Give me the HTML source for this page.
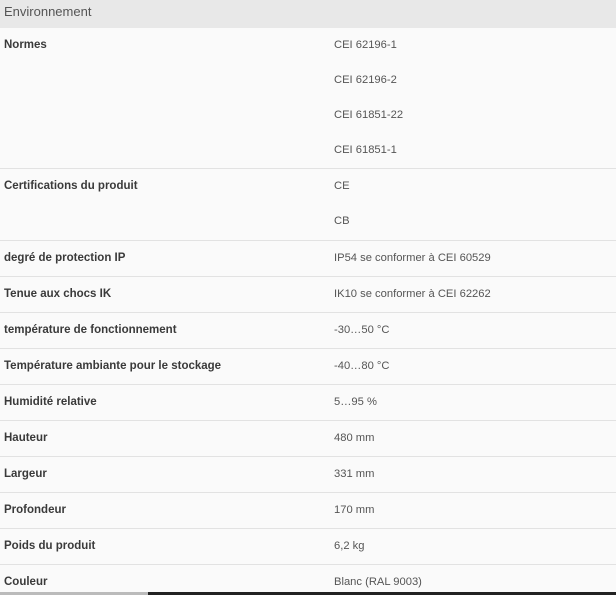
<!DOCTYPE html><html><head><style>
body{margin:0;width:616px;height:595px;overflow:hidden;background:#fafafa;font-family:"Liberation Sans",sans-serif;position:relative}
.h{height:28px;background:#e8e8e8;color:#555;font-size:13px;line-height:24px;padding-left:4px}
.r{position:absolute;left:0;width:616px;border-top:1px solid #e2e2e2}
.l{position:absolute;left:4px;font-size:11.5px;font-weight:bold;color:#3a3a3a;top:11px}
.v{position:absolute;left:334px;font-size:11.2px;color:#555}
.bar{position:absolute;left:0;top:592px;width:616px;height:3px;background:#222}
.bar2{position:absolute;left:0;top:592px;width:148px;height:3px;background:#bbb}
</style></head><body>
<div class="h">Environnement</div>
<div class="r" style="top:28px;border:0"><div class="l">Normes</div>
<div class="v" style="top:11px">CEI 62196-1</div><div class="v" style="top:46px">CEI 62196-2</div><div class="v" style="top:81px">CEI 61851-22</div><div class="v" style="top:116px">CEI 61851-1</div></div>
<div class="r" style="top:168px"><div class="l">Certifications du produit</div><div class="v" style="top:11px">CE</div><div class="v" style="top:46px">CB</div></div>
<div class="r" style="top:240px"><div class="l">degré de protection IP</div><div class="v" style="top:11px">IP54 se conformer à CEI 60529</div></div>
<div class="r" style="top:276px"><div class="l">Tenue aux chocs IK</div><div class="v" style="top:11px">IK10 se conformer à CEI 62262</div></div>
<div class="r" style="top:312px"><div class="l">température de fonctionnement</div><div class="v" style="top:11px">-30…50 °C</div></div>
<div class="r" style="top:348px"><div class="l">Température ambiante pour le stockage</div><div class="v" style="top:11px">-40…80 °C</div></div>
<div class="r" style="top:384px"><div class="l">Humidité relative</div><div class="v" style="top:11px">5…95 %</div></div>
<div class="r" style="top:420px"><div class="l">Hauteur</div><div class="v" style="top:11px">480 mm</div></div>
<div class="r" style="top:456px"><div class="l">Largeur</div><div class="v" style="top:11px">331 mm</div></div>
<div class="r" style="top:492px"><div class="l">Profondeur</div><div class="v" style="top:11px">170 mm</div></div>
<div class="r" style="top:528px"><div class="l">Poids du produit</div><div class="v" style="top:11px">6,2 kg</div></div>
<div class="r" style="top:564px"><div class="l">Couleur</div><div class="v" style="top:11px">Blanc (RAL 9003)</div></div>
<div class="bar"></div><div class="bar2"></div>
</body></html>
